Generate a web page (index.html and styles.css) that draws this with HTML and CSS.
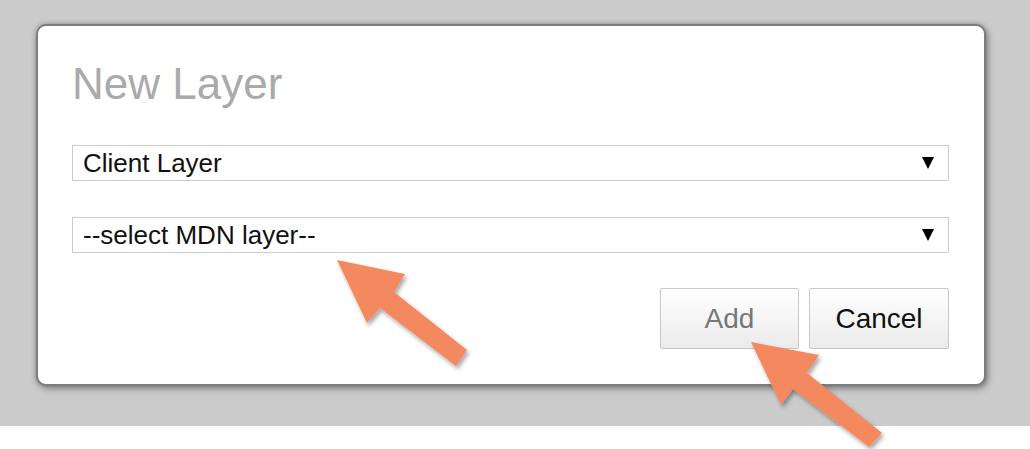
FILE: index.html
```html
<!DOCTYPE html>
<html lang="en">
<head>
<meta charset="utf-8">
<title>New Layer</title>
<link rel="stylesheet" href="styles.css">
</head>
<body>
<div class="page">
  <div class="dialog">
    <h1 class="title">New Layer</h1>
    <div class="select select-first">
      <span class="select-text">Client Layer</span>
      <svg class="caret" width="12" height="12" viewBox="0 0 12 12"><polygon points="0,0 12,0 6,12" fill="#000"/></svg>
    </div>
    <div class="select select-second">
      <span class="select-text">--select MDN layer--</span>
      <svg class="caret" width="12" height="12" viewBox="0 0 12 12"><polygon points="0,0 12,0 6,12" fill="#000"/></svg>
    </div>
    <div class="actions">
      <button class="btn btn-add">Add</button>
      <button class="btn btn-cancel">Cancel</button>
    </div>
  </div>
</div>
<svg class="arrows" width="1030" height="449" viewBox="0 0 1030 449">
  <defs>
    <filter id="sh" x="-20%" y="-20%" width="140%" height="140%">
      <feDropShadow dx="2" dy="3" stdDeviation="2" flood-color="#000" flood-opacity="0.35"/>
    </filter>
  </defs>
  <polygon filter="url(#sh)" fill="#f4885f" points="337,260 405,274 394,292 467,350 456,366 380,308 367,323"/>
  <polygon filter="url(#sh)" fill="#f4885f" points="751,342 819,355 807,373 882,433 869,447 793,389 781,405"/>
</svg>
</body>
</html>
```
FILE: styles.css
```css
* { box-sizing: border-box; }
body {
  margin: 0;
  background: #ffffff;
  font-family: "Liberation Sans", Arial, sans-serif;
  position: relative;
  width: 1030px;
  height: 449px;
  overflow: hidden;
}
.page {
  background: #cbcbcb;
  height: 426px;
  padding: 24px 0 0 36px;
}
.dialog {
  width: 950px;
  height: 362px;
  background: #ffffff;
  border: 2px solid #7d7d7d;
  border-radius: 10px;
  box-shadow: 0 0 5px rgba(0,0,0,0.25), 2px 3px 7px rgba(0,0,0,0.3);
  padding: 36px 35px 0 34px;
}
.title {
  margin: 0;
  font-size: 44px;
  line-height: 44px;
  font-weight: normal;
  color: #aaaaaa;
}
.select {
  height: 36px;
  border: 1px solid #cccccc;
  background: #ffffff;
  display: flex;
  align-items: center;
  justify-content: space-between;
  padding: 0 14px 0 10px;
}
.select-first { margin-top: 39px; }
.select-second { margin-top: 36px; }
.select-text {
  font-size: 26px;
  line-height: 26px;
  color: #111111;
}
.caret { display: block; }
.actions {
  margin-top: 35px;
  display: flex;
  justify-content: flex-end;
  gap: 10px;
}
.btn {
  height: 61px;
  border: 1px solid #c8c8c8;
  border-radius: 2px;
  background: linear-gradient(#ffffff, #ebebeb);
  font-family: "Liberation Sans", Arial, sans-serif;
  font-size: 28px;
  padding: 0;
}
.btn-add { width: 139px; color: #777777; }
.btn-cancel { width: 140px; color: #111111; }
.arrows {
  position: absolute;
  left: 0;
  top: 0;
}
```
